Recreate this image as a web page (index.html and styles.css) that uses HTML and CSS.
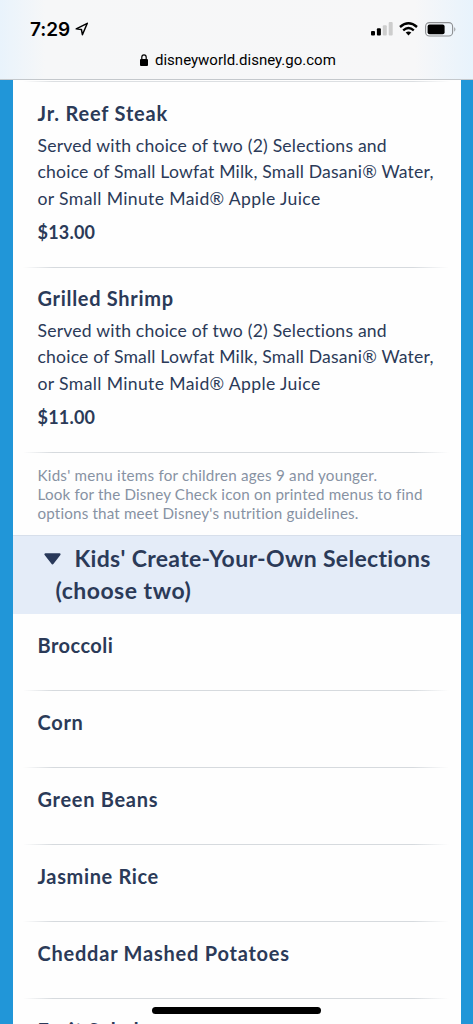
FILE: index.html
```html
<!DOCTYPE html>
<html lang="en">
<head>
<meta charset="utf-8">
<title>Kids' Menu</title>
<link rel="stylesheet" href="styles.css">
</head>
<body>
<div class="phone">
  <header class="browser">
    <div class="status">
      <div class="clock"><span class="time">7:29</span>
        <svg class="location" width="14" height="14" viewBox="0 0 14 14"><path d="M12.3 1.3 1.2 6.8 6.4 7.4 7.4 12.7Z" fill="none" stroke="#000" stroke-width="1.5" stroke-linejoin="round"/></svg>
      </div>
      <div class="indicators">
        <svg class="signal" width="22" height="14" viewBox="0 0 22 14"><rect x="0" y="9" width="4" height="4.6" rx="1"/><rect x="5.9" y="6.3" width="4" height="7.3" rx="1"/><g fill="#cdcdcd"><rect x="11.8" y="3.3" width="4" height="10.3" rx="1"/><rect x="17.7" y="0" width="4" height="13.6" rx="1"/></g></svg>
        <svg class="wifi" width="19" height="14" viewBox="0 0 19 14"><g fill="none" stroke="#000" stroke-width="2.4"><path d="M1 5Q9.5-2.4 18 5"/><path d="M4.2 8.3Q9.5 3.8 14.8 8.3"/></g><path d="M6.7 10.5Q9.5 8.4 12.3 10.5L9.5 13.5Z"/></svg>
        <svg class="battery" width="32" height="15" viewBox="0 0 32 15"><rect x=".6" y=".6" width="27" height="13.4" rx="3.8" fill="none" stroke="#8d8f92" stroke-width="1.1"/><rect x="2.6" y="2.4" width="17" height="9.8" rx="2"/><path d="M29.3 5Q31.5 7.3 29.3 9.8Z" fill="#8d8f92"/></svg>
      </div>
    </div>
    <div class="address">
      <svg width="8" height="12" viewBox="0 0 8 12"><rect x="0" y="5" width="8" height="7" rx="1"/><path d="M1.8 5.5V3.3a2.2 2.5 0 0 1 4.4 0V5.5" fill="none" stroke="#000" stroke-width="1.2"/></svg>
      <span class="domain">disneyworld.disney.go.com</span>
    </div>
  </header>
  <main class="page">
    <article class="dish">
      <h2 class="name steak">Jr. Reef Steak</h2>
      <p class="description"><span class="served">Served with choice of two (2) Selections and</span><br><span class="milk">choice of Small Lowfat Milk, Small Dasani® Water,</span><br><span class="juice">or Small Minute Maid® Apple Juice</span></p>
      <p class="price">$13.00</p>
    </article>
    <article class="dish">
      <h2 class="name shrimp">Grilled Shrimp</h2>
      <p class="description"><span class="served">Served with choice of two (2) Selections and</span><br><span class="milk">choice of Small Lowfat Milk, Small Dasani® Water,</span><br><span class="juice">or Small Minute Maid® Apple Juice</span></p>
      <p class="price">$11.00</p>
    </article>
    <p class="note"><span class="ages">Kids' menu items for children ages 9 and younger.</span><br><span class="look">Look for the Disney Check icon on printed menus to find</span><br><span class="options">options that meet Disney's nutrition guidelines.</span></p>
    <h1 class="section"><svg class="arrow" width="17" height="12" viewBox="0 0 17 12"><path d="M1.5 1.3H15.5L8.5 10.3Z" stroke-width="2.2" stroke-linejoin="round"/></svg><span class="heading-main">Kids' Create-Your-Own Selections</span><br><span class="heading-sub">(choose two)</span></h1>
    <ul class="choices">
      <li class="choice"><span class="name broccoli">Broccoli</span></li>
      <li class="choice"><span class="name corn">Corn</span></li>
      <li class="choice"><span class="name beans">Green Beans</span></li>
      <li class="choice"><span class="name rice">Jasmine Rice</span></li>
      <li class="choice"><span class="name potatoes">Cheddar Mashed Potatoes</span></li>
      <li class="choice"><span class="name salad">Fruit Salad</span></li>
    </ul>
  </main>
  <div class="home"></div>
</div>
</body>
</html>
```
FILE: styles.css
```css
* { box-sizing: border-box; }
body { margin: 0; overflow: hidden; }
h1, h2, p, ul { margin: 0; padding: 0; }
.phone { position: relative; width: 473px; height: 1024px; overflow: hidden; background: #2196d8; color: #2b3a58; font-family: Lato, sans-serif; font-variant-ligatures: none; }
.browser { height: 80px; padding: 19px 15px 0 30px; background: linear-gradient(90deg, #e9f3fc 0, #f6f7f8 45px, #f7f7f8 415px, #e8f3fc 100%); border-bottom: 1px solid #c4c8cc; color: #000; font-family: Inter, sans-serif; }
.status { display: flex; justify-content: space-between; height: 22px; }
.clock { display: flex; gap: 5px; align-items: flex-start; }
.time { font-size: 19px; font-weight: 600; line-height: 21px; letter-spacing: -.1px; }
.location { margin-top: 3px; }
.indicators { display: flex; margin-right: 1px; padding-top: 3px; }
.wifi { margin-left: 6px; }
.battery { margin-left: 7px; }
.address { display: flex; align-items: center; padding-left: 110px; height: 37px; }
.address svg { margin-right: 7px; }
.domain { font-family: Roboto, sans-serif; font-size: 15px; }
.page { width: 448px; height: 944px; margin-left: 12.5px; overflow: hidden; background: #fefefe linear-gradient(90deg, transparent 10px, #dcdfe2 40px, #dcdfe2 400px, transparent 438px) 0 1px / 100% 1px no-repeat; padding-top: 2px; }
.dish { height: 185.5px; padding: 18px 0 0 25px; background: linear-gradient(90deg, transparent 10px, #d6dade 40px, #d6dade 400px, transparent 436px) 0 100% / 100% 1px no-repeat; }
.dish + .dish { padding-top: 17.5px; }
.name { display: block; font-size: 20px; line-height: 26px; font-weight: 700; letter-spacing: .7px; white-space: nowrap; }
.steak { letter-spacing: .82px; }
.broccoli { letter-spacing: .45px; }
.rice { letter-spacing: .64px; }
.potatoes { letter-spacing: .77px; }
.description { margin-top: 7px; font-size: 17.6px; line-height: 26.4px; white-space: nowrap; }
.served { letter-spacing: .2px; }
.milk { letter-spacing: .18px; }
.juice { letter-spacing: .36px; }
.price { margin-top: 7px; font-size: 18px; line-height: 26px; font-weight: 700; letter-spacing: .2px; }
.note { height: 82px; padding: 13px 0 0 25px; color: #8792a3; font-size: 15.2px; line-height: 19px; white-space: nowrap; }
.ages { letter-spacing: .22px; }
.look { letter-spacing: .17px; }
.options { letter-spacing: .16px; }
.section { height: 79px; padding: 6px 0 0 31px; background: #e4ecf8; border-top: 1px solid #d7dfeb; font-size: 23px; line-height: 32px; white-space: nowrap; }
.arrow { margin-right: 14px; vertical-align: 2px; fill: #29395a; stroke: #29395a; }
.heading-main { letter-spacing: .32px; }
.heading-sub { margin-left: 12px; letter-spacing: .5px; }
.choices { list-style: none; }
.choice { height: 77px; padding: 18px 0 0 25px; background: linear-gradient(90deg, transparent 10px, #d6dade 40px, #d6dade 400px, transparent 436px) 0 100% / 100% 1px no-repeat; }
.home { position: absolute; left: 152px; top: 1007px; width: 169px; height: 7px; border-radius: 4px; background: #000; }
```
